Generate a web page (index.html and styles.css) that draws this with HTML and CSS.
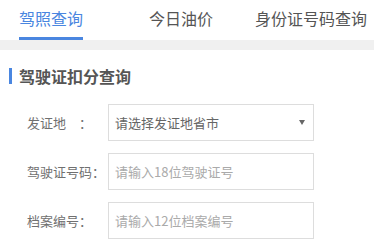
FILE: index.html
```html
<!DOCTYPE html>
<html lang="zh-CN">
<head>
  <meta charset="UTF-8" />
  <meta name="viewport" content="width=device-width, initial-scale=1.0" />
  <title>驾照查询</title>
  <link rel="stylesheet" href="styles.css">
</head>
<body>
  <div class="tabs">
    <div class="tab active"><span>驾照查询</span></div>
    <div class="tab"><span>今日油价</span></div>
    <div class="tab"><span>身份证号码查询</span></div>
  </div>
  <div class="divider"></div>

  <div class="section">
    <h2 class="section-title">驾驶证扣分查询</h2>
    <div class="form-row">
      <label><span class="name">发证地</span>：</label>
      <div class="select">
        <span>请选择发证地省市</span>
        <i class="arrow"></i>
      </div>
    </div>
    <div class="form-row">
      <label><span class="name">驾驶证号码</span>：</label>
      <input type="text" placeholder="请输入18位驾驶证号" />
    </div>
    <div class="form-row">
      <label><span class="name">档案编号</span>：</label>
      <input type="text" placeholder="请输入12位档案编号" />
    </div>
  </div>
</body>
</html>
```

FILE: styles.css
```css
body {
  margin: 0;
  background-color: #fff;
  font-family: "Noto Sans CJK SC", "Noto Sans", sans-serif;
  color: #666;
  overflow: hidden;
}
.tabs {
  display: flex;
  height: 40px;
  margin-left: -14px;
}
.tab {
  width: 130px;
  flex-shrink: 0;
  text-align: center;
  font-size: 16px;
  color: #555;
}
.tab span {
  display: inline-block;
  height: 37px;
  line-height: 37px;
}
.tab.active span {
  color: #4a86e0;
  border-bottom: 3px solid #4a86e0;
}
.divider {
  height: 10px;
  background-color: #f0f0f0;
}
.section-title {
  margin: 18px 0 20px 9px;
  padding-left: 7px;
  border-left: 3px solid #4a86e0;
  font-size: 16px;
  line-height: 16px;
  color: #555;
}
.form-row {
  display: flex;
  align-items: center;
  padding-left: 27px;
  margin-bottom: 12px;
}
.form-row label {
  width: 81px;
  font-size: 13px;
  color: #707070;
}
.form-row .name {
  display: inline-block;
  min-width: 52px;
}
.select,
.form-row input {
  box-sizing: border-box;
  width: 206px;
  height: 37px;
  border: 1px solid #ddd;
  font-family: inherit;
  font-size: 13px;
  padding: 0 6px;
  margin: 0;
  outline: none;
}
.select {
  display: flex;
  align-items: center;
  justify-content: space-between;
  color: #666;
  padding-right: 8px;
}
.form-row input::placeholder {
  color: #aaa;
}
.arrow {
  width: 0;
  height: 0;
  border-left: 3px solid transparent;
  border-right: 3px solid transparent;
  border-top: 5px solid #666;
}
```
